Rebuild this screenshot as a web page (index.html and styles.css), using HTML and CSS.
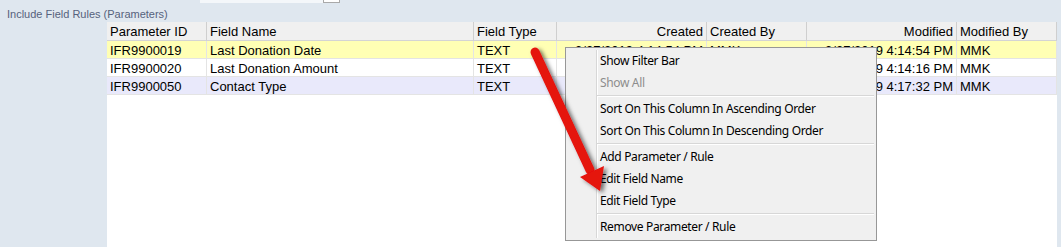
FILE: index.html
```html
<!DOCTYPE html>
<html lang="en">
<head>
    <meta charset="UTF-8">
    <title>Include Field Rules</title>
    <link rel="stylesheet" href="styles.css">
</head>
<body>
    <div class="topbar">
        <div class="top-input"></div>
        <div class="top-button"></div>
    </div>
    <div class="section-label">Include Field Rules (Parameters)</div>

    <div class="main">
        <div class="grid">
            <div class="row header">
                <div class="cell">Parameter ID</div>
                <div class="cell">Field Name</div>
                <div class="cell">Field Type</div>
                <div class="cell right">Created</div>
                <div class="cell">Created By</div>
                <div class="cell right">Modified</div>
                <div class="cell">Modified By</div>
            </div>
            <div class="row selected">
                <div class="cell">IFR9900019</div>
                <div class="cell">Last Donation Date</div>
                <div class="cell">TEXT</div>
                <div class="cell right">3/27/2019 4:14:54 PM</div>
                <div class="cell">MMK</div>
                <div class="cell right">3/27/2019 4:14:54 PM</div>
                <div class="cell">MMK</div>
            </div>
            <div class="row">
                <div class="cell">IFR9900020</div>
                <div class="cell">Last Donation Amount</div>
                <div class="cell">TEXT</div>
                <div class="cell right">3/27/2019 4:14:16 PM</div>
                <div class="cell">MMK</div>
                <div class="cell right">3/27/2019 4:14:16 PM</div>
                <div class="cell">MMK</div>
            </div>
            <div class="row alt">
                <div class="cell">IFR9900050</div>
                <div class="cell">Contact Type</div>
                <div class="cell">TEXT</div>
                <div class="cell right">3/27/2019 4:17:32 PM</div>
                <div class="cell">MMK</div>
                <div class="cell right">3/27/2019 4:17:32 PM</div>
                <div class="cell">MMK</div>
            </div>
        </div>
    </div>

    <!-- context menu -->
    <div class="context-menu">
        <div class="item">Show Filter Bar</div>
        <div class="item disabled">Show All</div>
        <div class="sep"></div>
        <div class="item">Sort On This Column In Ascending Order</div>
        <div class="item">Sort On This Column In Descending Order</div>
        <div class="sep"></div>
        <div class="item">Add Parameter / Rule</div>
        <div class="item">Edit Field Name</div>
        <div class="item">Edit Field Type</div>
        <div class="sep"></div>
        <div class="item">Remove Parameter / Rule</div>
    </div>

    <!-- red callout arrow drawn over the menu -->
    <svg class="arrow" width="1061" height="247" viewBox="0 0 1061 247">
        <defs>
            <filter id="shadow" x="-50%" y="-50%" width="200%" height="200%">
                <feDropShadow dx="3" dy="2" stdDeviation="2" flood-color="#000" flood-opacity="0.55"/>
            </filter>
        </defs>
        <g filter="url(#shadow)">
            <line x1="535" y1="52" x2="590" y2="170" stroke="#e5120f" stroke-width="9" stroke-linecap="round"/>
            <polygon points="600,191 580,177 604,166" fill="#e5120f"/>
        </g>
    </svg>
</body>
</html>
```

FILE: styles.css
```css
body {
    margin: 0;
    height: 247px;
    overflow: hidden;
    background-color: #dfe7ef;
    font-family: "Liberation Sans", Arial, sans-serif;
    display: flex;
    flex-direction: column;
}

.topbar {
    display: flex;
    height: 3px;
    flex-shrink: 0;
}

.top-input {
    margin-left: 200px;
    width: 123px;
    background-color: #f4f7fa;
}

.top-button {
    width: 15px;
    background-color: #fff;
    border: 1px solid #a9a9a9;
    border-top: none;
}

.section-label {
    height: 19px;
    padding-left: 7px;
    padding-top: 3px;
    box-sizing: border-box;
    line-height: 16px;
    font-size: 11px;
    color: #56627c;
    flex-shrink: 0;
}

.main {
    flex: 1;
    display: flex;
    padding-left: 107px;
}

.grid {
    width: 950px;
    background-color: #fff;
}

.row {
    display: grid;
    grid-template-columns: 100px 267px 83px 150px 100px 150px 100px;
    height: 18px;
    font-size: 13px;
    color: #000;
}

.row .cell {
    border-right: 1px solid #e4e4e4;
    border-bottom: 1px solid #e4e4e4;
    padding: 1px 3px 0 3px;
    line-height: 17px;
    white-space: nowrap;
    overflow: hidden;
}

.row .cell.right {
    text-align: right;
}

.header {
    height: 19px;
    background-color: #f0f0f0;
}

.header .cell {
    line-height: 18px;
    border-right-color: #cfcfcf;
    border-bottom-color: #d4d4d4;
}

.selected {
    background-color: #ffffb4;
}

.alt {
    background-color: #e9e9fb;
}

.context-menu {
    position: absolute;
    left: 565px;
    top: 47px;
    width: 310px;
    padding: 2px 0 2px 0;
    background-color: #f0f0f0;
    border: 1px solid #979797;
    font-family: "Noto Sans", "Open Sans", sans-serif;
    font-size: 12px;
    letter-spacing: -0.35px;
    color: #000;
}

.context-menu::before {
    content: "";
    position: absolute;
    left: 30px;
    top: 2px;
    bottom: 2px;
    width: 1px;
    background-color: #d7d7d7;
    border-right: 1px solid #fff;
}

.item {
    height: 22px;
    line-height: 22px;
    padding-left: 34px;
    white-space: nowrap;
}

.item.disabled {
    color: #8d8d8d;
}

.sep {
    height: 4px;
    margin-left: 31px;
    margin-right: 2px;
    position: relative;
}

.sep::after {
    content: "";
    position: absolute;
    left: 0;
    right: 0;
    top: 1px;
    height: 1px;
    background-color: #d7d7d7;
    border-bottom: 1px solid #fff;
}

.arrow {
    position: absolute;
    left: 0;
    top: 0;
    pointer-events: none;
}
```
